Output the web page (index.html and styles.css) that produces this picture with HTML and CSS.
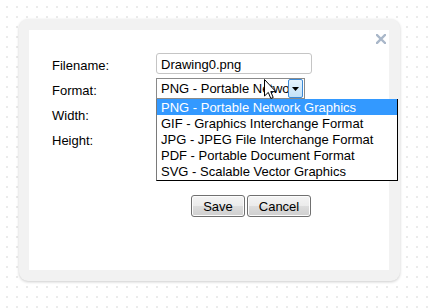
FILE: index.html
```html
<!DOCTYPE html>
<html><head><title>Export</title>
<link rel="stylesheet" href="styles.css">
</head>
<body>
<div class="dialog">
  <div class="panel">
    <span class="close"><svg width="10" height="10" viewBox="0 0 10 10"><path d="M1 1 L9 9 M9 1 L1 9" stroke="#a9b7c9" stroke-width="2.4" stroke-linecap="square"/></svg></span>

    <div class="form">
      <label>Filename:</label>
      <input class="text" type="text" value="Drawing0.png">

      <label>Format:</label>
      <div class="select-wrap">
        <div class="select">
          <span class="select-value">PNG - Portable Network Graphics</span>
          <span class="select-btn"><svg width="7" height="4" viewBox="0 0 7 4"><path d="M0 0 H7 L3.5 4 Z" fill="#000"/></svg></span>
        </div>
        <ul class="options">
          <li class="selected">PNG - Portable Network Graphics</li>
          <li>GIF - Graphics Interchange Format</li>
          <li>JPG - JPEG File Interchange Format</li>
          <li>PDF - Portable Document Format</li>
          <li>SVG - Scalable Vector Graphics</li>
        </ul>
      </div>

      <label>Width:</label>
      <input class="text" type="text" value="">

      <label>Height:</label>
      <input class="text" type="text" value="">
    </div>

    <div class="buttons">
      <button class="btn btn-save">Save</button>
      <button class="btn btn-cancel">Cancel</button>
    </div>
  </div>

  <svg class="cursor" width="13" height="21" viewBox="0 0 13 21"><path d="M0.5 0.5 V17 L4.3 13.4 L6.8 19.5 L9.2 18.5 L6.8 12.6 L11.8 12.6 Z" fill="#fff" stroke="#000" stroke-width="1" stroke-linejoin="miter"/></svg>
</div>
</body>
</html>
```

FILE: styles.css
```css
html, body {
  margin: 0;
  padding: 0;
}

body {
  width: 428px;
  height: 308px;
  background-color: #fff;
  background-image: radial-gradient(circle, #ebebeb 0.8px, transparent 1.2px);
  background-size: 10px 10px;
  background-position: 2px 2px;
  font-family: "Liberation Sans", Arial, sans-serif;
  font-size: 13px;
  color: #000;
  overflow: hidden;
}

.dialog {
  position: relative;
  margin: 19px 0 0 19px;
  width: 381px;
  height: 262px;
  box-sizing: border-box;
  padding: 11px 11px 11px 10px;
  background: #f2f2f2;
  border-radius: 9px;
  box-shadow: 0 1px 3px rgba(0, 0, 0, 0.2);
}

.panel {
  position: relative;
  height: 100%;
  background: #fff;
}

.close {
  position: absolute;
  top: 4px;
  right: 3px;
  line-height: 0;
}

.form {
  display: grid;
  grid-template-columns: 104px 200px;
  grid-auto-rows: 25px;
  align-items: center;
  padding: 21px 0 0 23px;
}

label {
  padding-top: 3px;
  line-height: 15px;
}

.text {
  width: 156px;
  height: 21px;
  box-sizing: border-box;
  margin: 0;
  padding: 2px 4px 0;
  border: 1px solid #c5c5c5;
  border-radius: 3px;
  font-family: inherit;
  font-size: 13px;
  color: #000;
  outline: none;
}

.select-wrap {
  position: relative;
  height: 21px;
}

.select {
  display: flex;
  width: 149px;
  height: 21px;
  box-sizing: border-box;
  border: 1px solid #8a8a8a;
  background: #fff;
}

.select-value {
  flex: 1;
  overflow: hidden;
  white-space: nowrap;
  padding: 2px 0 0 4px;
  line-height: 16px;
}

.select-btn {
  display: flex;
  align-items: center;
  justify-content: center;
  width: 15px;
  margin: 0 1px 0 0;
  box-sizing: border-box;
  border: 1px solid #3d8ad6;
  border-radius: 2px;
  background: linear-gradient(#e6f3fd, #c4e2f8);
}

.options {
  position: absolute;
  top: 21px;
  left: 0;
  width: 242px;
  box-sizing: border-box;
  margin: 0;
  padding: 0 0 1px;
  list-style: none;
  background: #fff;
  border-left: 1px solid #7a7a7a;
  border-right: 1px solid #000;
  border-bottom: 1px solid #000;
}

.options li {
  height: 16px;
  line-height: 17px;
  padding-left: 4px;
  white-space: nowrap;
}

.options li.selected {
  background: #3399ff;
  color: #fff;
}

.buttons {
  display: flex;
  gap: 2px;
  padding: 44px 0 0 162px;
}

.btn {
  height: 22px;
  margin: 0;
  padding: 0;
  box-sizing: border-box;
  border: 1px solid #707070;
  border-radius: 3px;
  background: linear-gradient(#f4f4f4 0%, #ebebeb 50%, #dddddd 51%, #cfcfcf 100%);
  box-shadow: inset 0 0 0 1px #fcfcfc;
  font-family: inherit;
  font-size: 13px;
  color: #000;
}

.btn-save { width: 54px; }
.btn-cancel { width: 64px; }

.cursor {
  position: absolute;
  left: 245px;
  top: 60px;
}
```
